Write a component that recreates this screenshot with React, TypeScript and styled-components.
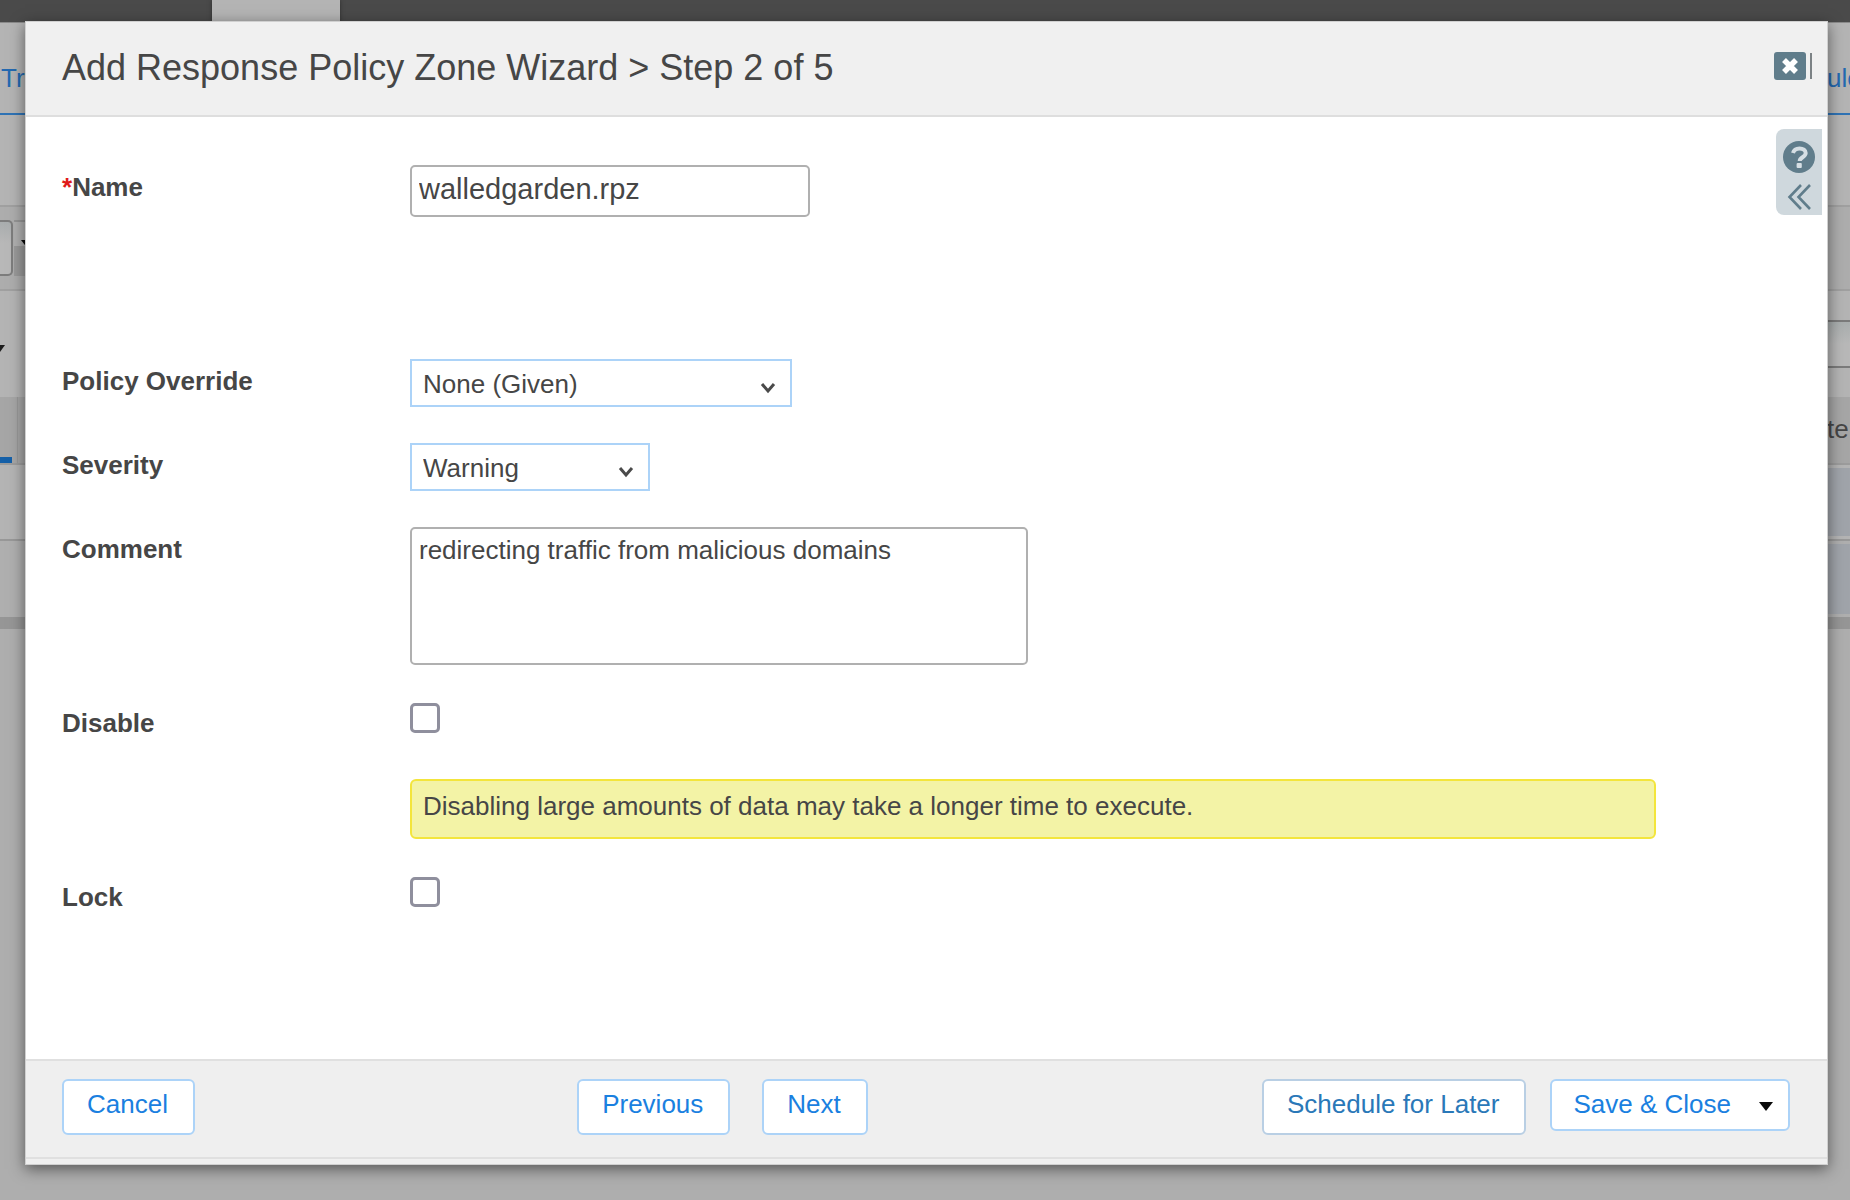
import React, { useState } from "react";
import styled, { createGlobalStyle } from "styled-components";

const GlobalStyle = createGlobalStyle`
  *, *::before, *::after { box-sizing: border-box; }
  body {
    margin: 0;
    background: #aeaeae;
    color: #464646;
    font-family: "Liberation Sans", Arial, sans-serif;
    font-size: 26px;
    line-height: 30px;
  }
  button, input, select, textarea { font: inherit; color: inherit; }
`;

/* ---------- dimmed page behind the dialog ---------- */

const Screen = styled.div`
  display: grid;
  min-height: 100vh;
  overflow: hidden;
`;

const Backdrop = styled.div`
  grid-area: 1 / 1;
  min-width: 0;
  background: #aeaeae;
`;

const TopBar = styled.div`
  height: 23px;
  padding-left: 212px;
  background: #4a4a4a;
  border-bottom: 1px solid #8a8a8a;
`;

const ActiveTab = styled.div`
  width: 128px;
  height: 22px;
  background: #b4b4b4;
  box-shadow: 0 0 4px #2e2e2e;
`;

const Band = styled.div<{ $height: number; $bg?: string; $line?: string }>`
  display: flex;
  justify-content: space-between;
  align-items: center;
  height: ${(p) => p.$height}px;
  background: ${(p) => p.$bg ?? "#b4b4b4"};
  border-bottom: ${(p) => (p.$line ? `2px solid ${p.$line}` : "0")};
`;

const LinkBand = styled(Band)`
  padding: 20px 0 0 1px;
`;

const BackLink = styled.a`
  color: #2469b0;
  text-decoration: none;
`;

const Edge = styled.div`
  width: 23px;
  white-space: nowrap;
`;

const Combo = styled.div`
  display: flex;
  gap: 1px;
  height: 56px;
`;

const ComboField = styled.div`
  width: 13px;
  border: 2px solid #7d7d7d;
  border-left: 0;
  border-radius: 0 5px 5px 0;
  background: linear-gradient(#a9adae, #b8b8b8 40%);
`;

const ComboButton = styled.div`
  display: flex;
  align-items: center;
  width: 30px;
  padding: 0 0 10px 7px;
  border-top: 2px solid #969696;
  background: linear-gradient(#b0b0b0 45%, #9a9a9a 45%);
`;

const FilterField = styled.div`
  width: 23px;
  height: 48px;
  border: solid #7b7b7b;
  border-width: 2px 0;
  background: linear-gradient(#a9aeae, #b8b8b8 50%);
`;

const HeadBand = styled(Band)`
  padding-bottom: 3px;
`;

const HeadMark = styled.div`
  align-self: stretch;
  display: flex;
  align-items: flex-end;
  width: 18px;
  margin-bottom: -3px;
  border-right: 1px solid #999;

  &::before {
    content: "";
    width: 12px;
    height: 6px;
    background: #1560a8;
  }
`;

const Cell = styled.div`
  align-self: stretch;
  width: 23px;
  margin: 3px 0 3px auto;
  background: #a0a4aa;
`;

/* ---------- dialog ---------- */

const Overlay = styled.div`
  grid-area: 1 / 1;
  z-index: 1;
  display: flex;
  min-width: 0;
  padding: 21px 22px 35px 25px;
`;

const Dialog = styled.section`
  flex: 1;
  display: flex;
  flex-direction: column;
  min-width: 0;
  border: 1px solid #d0d0d0;
  background: #fff;
  box-shadow: 0 4px 14px rgba(0, 0, 0, 0.5);
`;

const Header = styled.header`
  display: flex;
  justify-content: space-between;
  align-items: flex-start;
  padding: 22px 15px 23px 36px;
  background: #f0f0f0;
  border-bottom: 2px solid #dedede;
`;

const Title = styled.h1`
  margin: 0;
  font-size: 36px;
  font-weight: 400;
  line-height: 48px;
`;

const CloseArea = styled.div`
  display: flex;
  align-items: center;
  gap: 4px;
  padding-top: 8px;
`;

const IconButton = styled.button`
  display: flex;
  padding: 0;
  border: 0;
  background: none;
  color: #607d8b;
  cursor: pointer;
`;

const Divider = styled.span`
  width: 2px;
  height: 26px;
  background: #7c8285;
`;

const Body = styled.div`
  flex: 1;
  display: flex;
  align-items: flex-start;
`;

const Form = styled.form`
  flex: 1;
  display: flex;
  flex-direction: column;
  gap: 36px;
  min-width: 0;
  padding: 48px 120px 48px 36px;
`;

const Row = styled.div<{ $minHeight?: number }>`
  display: grid;
  grid-template-columns: 348px minmax(0, 1fr);
  align-items: start;
  min-height: ${(p) => p.$minHeight ?? 30}px;
`;

const Label = styled.label`
  padding-top: 7px;
  font-weight: 700;
`;

const Required = styled.span`
  color: #e01a1a;
`;

const TextInput = styled.input`
  width: 400px;
  max-width: 100%;
  height: 52px;
  padding: 0 7px 4px;
  border: 2px solid #b0b0b0;
  border-radius: 5px;
  background: #fff;
  font-size: 29px;
`;

const SelectBox = styled.div<{ $width: number }>`
  display: grid;
  align-items: center;
  width: ${(p) => p.$width}px;
  max-width: 100%;

  > * { grid-area: 1 / 1; }

  svg {
    justify-self: end;
    margin-right: 16px;
    pointer-events: none;
  }
`;

const Select = styled.select`
  appearance: none;
  width: 100%;
  height: 48px;
  padding: 2px 40px 0 11px;
  border: 2px solid #acd3f8;
  border-radius: 0;
  background: #fff;
`;

const TextArea = styled.textarea`
  display: block;
  width: 618px;
  max-width: 100%;
  height: 138px;
  padding: 6px 7px;
  border: 2px solid #b0b0b0;
  border-radius: 5px;
  background: #fff;
  resize: none;
`;

const Checkbox = styled.input`
  appearance: none;
  display: block;
  width: 30px;
  height: 30px;
  margin: 2px 0 0;
  border: 3px solid #8f8f9d;
  border-radius: 5px;
  background: #fff;

  &:checked { background: #1a80e0; }
`;

const Notice = styled.p`
  margin: 46px 0 0;
  padding: 10px 11px 16px;
  border: 2px solid #f3e53c;
  border-radius: 6px;
  background: #f3f3a6;
`;

const HelpTab = styled.aside`
  display: flex;
  flex-direction: column;
  align-items: center;
  gap: 11px;
  width: 46px;
  height: 86px;
  margin: 12px 5px 0 0;
  padding-top: 12px;
  border-radius: 8px 0 0 8px;
  background: #cfd8dd;
`;

const Footer = styled.footer`
  display: flex;
  justify-content: space-between;
  align-items: flex-start;
  padding: 18px 37px 22px 36px;
  border: solid #e0e0e0;
  border-width: 2px 0;
  background: #efefef;
`;

const FooterBase = styled.div`
  height: 5px;
  background: #f0f0f0;
`;

const ButtonGroup = styled.div<{ $gap: number; $shift?: number }>`
  display: flex;
  align-items: flex-start;
  gap: ${(p) => p.$gap}px;
  margin-right: ${(p) => p.$shift ?? 0}px;
`;

const Button = styled.button<{ $muted?: boolean }>`
  height: 56px;
  padding: 0 25px 6px 23px;
  border: 2px solid ${(p) => (p.$muted ? "#b9cfe4" : "#acd3f8")};
  border-radius: 6px;
  background: #fff;
  color: ${(p) => (p.$muted ? "#2a78b8" : "#1a80e0")};
  white-space: nowrap;
  cursor: pointer;
`;

const SplitButton = styled.div`
  display: flex;
  height: 52px;
  border: 2px solid #acd3f8;
  border-radius: 6px;
  background: #fff;
`;

const SplitMain = styled.button`
  padding: 0 0 2px 21px;
  border: 0;
  background: none;
  color: #1a80e0;
  white-space: nowrap;
  cursor: pointer;
`;

const SplitCaret = styled.button`
  display: flex;
  align-items: center;
  padding: 2px 15px 0 28px;
  border: 0;
  background: none;
  cursor: pointer;
`;

const Caret = () => (
  <svg width="14" height="9" viewBox="0 0 14 9" aria-hidden="true">
    <path d="M0 0h14L7 9z" fill="#0a0a0a" />
  </svg>
);

const Chevron = () => (
  <svg width="16" height="22" viewBox="0 0 16 22" fill="none" aria-hidden="true">
    <path d="M2 12l6 7 6-7" stroke="#4a4a4a" strokeWidth="3" />
  </svg>
);

const CloseIcon = () => (
  <svg width="32" height="28" viewBox="0 0 32 28" aria-hidden="true">
    <rect width="32" height="28" rx="3" fill="#607d8b" />
    <path d="M10 8l12 12M22 8l-12 12" stroke="#fff" strokeWidth="5.5" />
  </svg>
);

const HelpIcon = () => (
  <svg width="32" height="32" viewBox="0 0 32 32" fill="none" aria-hidden="true">
    <circle cx="16" cy="16" r="16" fill="#607d8b" />
    <path
      d="M10 12C10.800 9 13.400 7.400 16.500 7.400c3.500 0 6.200 1.800 6.200 4.600 0 4.200-6 4.200-6 8"
      stroke="#d6dfe4"
      strokeWidth="4"
    />
    <rect x="13.600" y="22" width="5.200" height="5" rx="1" fill="#d6dfe4" />
  </svg>
);

const CollapseIcon = () => (
  <svg width="24" height="26" viewBox="0 0 24 26" fill="none" aria-hidden="true">
    <path d="M14 1L2.500 13 14 25M23 1L11.500 13 23 25" stroke="#607d8b" strokeWidth="2.600" />
  </svg>
);

function BackgroundPage() {
  return (
    <Backdrop>
      <TopBar>
        <ActiveTab />
      </TopBar>
      <LinkBand $height={92} $line="#2f73b5">
        <Edge>
          <BackLink href="#tr">Tr</BackLink>
        </Edge>
        <Edge>
          <BackLink href="#ule">ule</BackLink>
        </Edge>
      </LinkBand>
      <Band $height={92} $line="#a0a0a0" />
      <Band $height={84} $bg="#adadad" $line="#a0a0a0">
        <Combo>
          <ComboField />
          <ComboButton>
            <Caret />
          </ComboButton>
        </Combo>
      </Band>
      <Band $height={106}>
        <Edge>
          <svg width="6" height="9" viewBox="0 0 6 9" aria-hidden="true">
            <path d="M0 1h5L0 8z" fill="#1c1c1c" />
          </svg>
        </Edge>
        <FilterField />
      </Band>
      <HeadBand $height={68} $bg="#a6a6a6" $line="#9c9c9c">
        <HeadMark />
        <Edge>te</Edge>
      </HeadBand>
      <Band $height={76} $line="#989898">
        <Cell />
      </Band>
      <Band $height={76} $bg="#afafaf">
        <Cell />
      </Band>
      <Band $height={12} $bg="#969696" />
    </Backdrop>
  );
}

export default function App() {
  const [name, setName] = useState("walledgarden.rpz");
  const [comment, setComment] = useState("redirecting traffic from malicious domains");

  return (
    <>
      <GlobalStyle />
      <Screen>
        <BackgroundPage />
        <Overlay>
          <Dialog role="dialog" aria-labelledby="wizard-title">
            <Header>
              <Title id="wizard-title">Add Response Policy Zone Wizard &gt; Step 2 of 5</Title>
              <CloseArea>
                <IconButton type="button" aria-label="Close">
                  <CloseIcon />
                </IconButton>
                <Divider />
              </CloseArea>
            </Header>

            <Body>
              <Form id="zone-form" onSubmit={(e) => e.preventDefault()}>
                <Row $minHeight={158}>
                  <Label htmlFor="name">
                    <Required>*</Required>Name
                  </Label>
                  <TextInput id="name" value={name} onChange={(e) => setName(e.target.value)} />
                </Row>
                <Row>
                  <Label htmlFor="override">Policy Override</Label>
                  <SelectBox $width={382}>
                    <Select id="override">
                      <option>None (Given)</option>
                    </Select>
                    <Chevron />
                  </SelectBox>
                </Row>
                <Row>
                  <Label htmlFor="severity">Severity</Label>
                  <SelectBox $width={240}>
                    <Select id="severity">
                      <option>Warning</option>
                    </Select>
                    <Chevron />
                  </SelectBox>
                </Row>
                <Row>
                  <Label htmlFor="comment">Comment</Label>
                  <TextArea
                    id="comment"
                    value={comment}
                    onChange={(e) => setComment(e.target.value)}
                  />
                </Row>
                <Row>
                  <Label htmlFor="disable">Disable</Label>
                  <div>
                    <Checkbox id="disable" type="checkbox" />
                    <Notice>Disabling large amounts of data may take a longer time to execute.</Notice>
                  </div>
                </Row>
                <Row>
                  <Label htmlFor="lock">Lock</Label>
                  <Checkbox id="lock" type="checkbox" />
                </Row>
              </Form>
              <HelpTab>
                <IconButton type="button" aria-label="Help">
                  <HelpIcon />
                </IconButton>
                <IconButton type="button" aria-label="Expand help panel">
                  <CollapseIcon />
                </IconButton>
              </HelpTab>
            </Body>

            <Footer>
              <Button type="button">Cancel</Button>
              <ButtonGroup $gap={32} $shift={12}>
                <Button type="button">Previous</Button>
                <Button type="submit" form="zone-form">
                  Next
                </Button>
              </ButtonGroup>
              <ButtonGroup $gap={24}>
                <Button type="button" $muted>
                  Schedule for Later
                </Button>
                <SplitButton>
                  <SplitMain type="button">Save &amp; Close</SplitMain>
                  <SplitCaret type="button" aria-label="More save options">
                    <Caret />
                  </SplitCaret>
                </SplitButton>
              </ButtonGroup>
            </Footer>
            <FooterBase />
          </Dialog>
        </Overlay>
      </Screen>
    </>
  );
}
